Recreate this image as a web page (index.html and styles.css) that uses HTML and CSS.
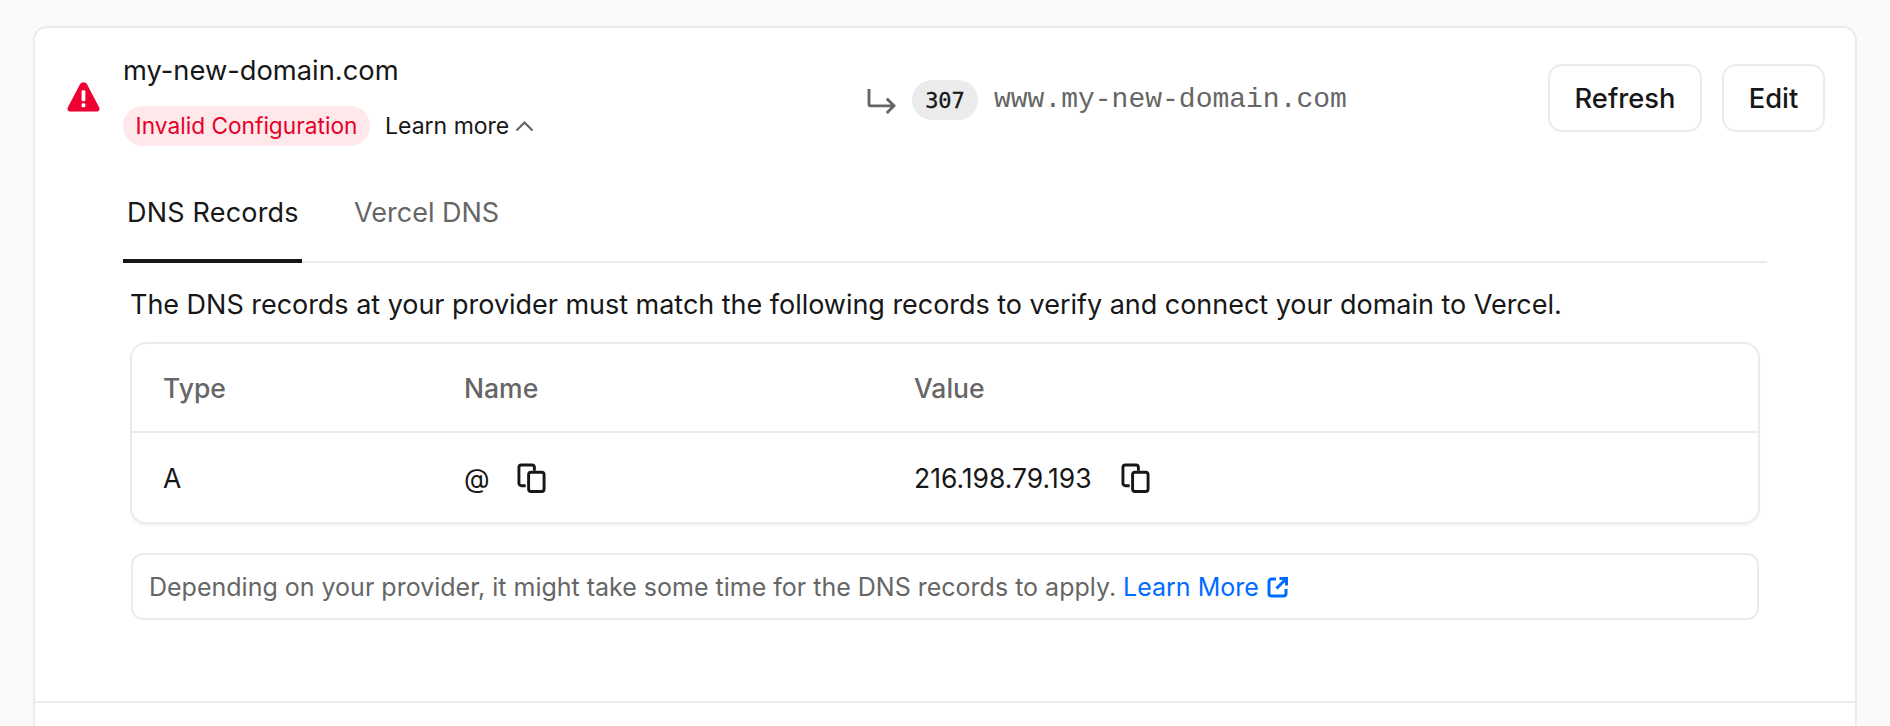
FILE: index.html
```html
<!DOCTYPE html>
<html lang="en">
<head>
<meta charset="utf-8">
<title>Domain</title>
<link rel="stylesheet" href="styles.css">
</head>
<body>
<main class="card">
  <header class="head">
    <svg class="warn" viewBox="0 0 32 29" aria-hidden="true"><path fill="#ee0030" d="M12.600 2.200c1.500-2.800 5.300-2.800 6.800 0l11.700 22.200c1 1.900.2 4.100-2 4.100H2.900c-2.200 0-3-2.200-2-4.100z"/><rect x="14.200" y="8" width="3.600" height="10.500" rx="1" fill="#fff"/><rect x="14.200" y="20.600" width="3.600" height="3.800" rx="1" fill="#fff"/></svg>
    <div class="title-block">
      <div class="domain">my-new-domain.com</div>
      <div class="status">
        <span class="badge">Invalid Configuration</span>
        <span class="learn">Learn more</span>
        <svg class="chev" viewBox="0 0 19 12" aria-hidden="true"><path d="M1.500 10.500 9.500 2.500l8 8" fill="none" stroke="#666" stroke-width="2.200"/></svg>
      </div>
    </div>
    <div class="redirect">
      <svg class="arrow" viewBox="0 0 30 26" aria-hidden="true"><path d="M2 0v15.500a2 2 0 0 0 2 2h24M20.500 10l7.500 7.500-7.500 7.500" fill="none" stroke="#666" stroke-width="3"/></svg>
      <span class="code">307</span>
      <span class="target">www.my-new-domain.com</span>
    </div>
    <div class="actions">
      <button class="btn btn-refresh">Refresh</button>
      <button class="btn btn-edit">Edit</button>
    </div>
  </header>

  <section class="body">
    <nav class="tabs">
      <span class="tab active">DNS Records</span>
      <span class="tab">Vercel DNS</span>
    </nav>
    <div class="inner">
      <p class="intro">The DNS records at your provider must match the following records to verify and connect your domain to Vercel.</p>
      <div class="table">
        <div class="row row-head">
          <span class="c1">Type</span><span class="c2">Name</span><span>Value</span>
        </div>
        <div class="row row-data">
          <span class="c1">A</span>
          <span class="c2 cell"><span class="at">@</span><svg class="copy" viewBox="0 0 30 31" aria-hidden="true"><path d="M9 23.500H4.500a2.500 2.500 0 0 1-2.500-2.500V4.500A2.500 2.500 0 0 1 4.500 2h11A2.500 2.500 0 0 1 18 4.500V8" fill="none" stroke="#171717" stroke-width="3"/><rect x="12" y="9.500" width="16" height="20" rx="2.500" fill="none" stroke="#171717" stroke-width="3"/></svg></span>
          <span class="cell"><span class="ip">216.198.79.193</span><svg class="copy" viewBox="0 0 30 31" aria-hidden="true"><path d="M9 23.500H4.500a2.500 2.500 0 0 1-2.500-2.500V4.500A2.500 2.500 0 0 1 4.500 2h11A2.500 2.500 0 0 1 18 4.500V8" fill="none" stroke="#171717" stroke-width="3"/><rect x="12" y="9.500" width="16" height="20" rx="2.500" fill="none" stroke="#171717" stroke-width="3"/></svg></span>
        </div>
      </div>
      <div class="note">
        <span>Depending on your provider, it might take some time for the DNS records to apply.</span>
        <a class="link" href="#">Learn More</a>
        <svg class="ext" viewBox="0 0 22 22" aria-hidden="true"><path d="M9 3H4.500A2.500 2.500 0 0 0 2 5.500v12A2.500 2.500 0 0 0 4.500 20h12a2.500 2.500 0 0 0 2.500-2.500V13M9.500 12.500 19 3M12.500 2.500H19.500V9.500" fill="none" stroke="#006bff" stroke-width="3"/></svg>
      </div>
    </div>
  </section>
  <div class="foot"></div>
</main>
</body>
</html>
```
FILE: styles.css
```css
* { box-sizing: border-box; }
html, body { margin: 0; height: 726px; overflow: hidden; }
body {
  background: #fafafa;
  padding: 26px 33px 0 33px;
  font-family: Inter, "Noto Sans", sans-serif;
  color: #171717;
}
.card {
  width: 1824px;
  height: 800px;
  background: #fff;
  border: 2px solid #ebebeb;
  border-radius: 14px;
}
.head {
  display: flex;
  align-items: flex-start;
  height: 133px;
  padding: 0 29px 0 32px;
}
.warn { width: 33px; height: 30px; margin: 54px 23px 0 0; flex: none; }
.title-block { width: 744px; flex: none; }
.domain {
  font-size: 27.300px;
  line-height: 36px;
  margin-top: 25px;
}
.status { display: flex; align-items: center; margin-top: 17px; }
.badge {
  height: 40px;
  width: 247px;
  border-radius: 20px;
  background: #ffe8e9;
  color: #e6002b;
  font-size: 22.700px;
  line-height: 40px;
  text-align: center;
  margin-right: 15px;
}
.learn { font-size: 23px; }
.chev { width: 19px; height: 12px; margin-left: 6px; }
.redirect { display: flex; align-items: center; margin-top: 50px; flex: none; }
.arrow { width: 29px; height: 25px; margin-right: 16px; margin-top: 3px; }
.code {
  width: 66px;
  height: 40px;
  border-radius: 20px;
  background: #ebebeb;
  font-family: "DejaVu Sans Mono", monospace;
  font-size: 22px;
  line-height: 41px;
  text-align: center;
  margin-right: 16px;
  -webkit-text-stroke: 0.3px #171717;
}
.target {
  font-family: "Liberation Mono", monospace;
  font-size: 28px;
  line-height: 44px;
  color: #666;
}
.actions { display: flex; gap: 20px; margin-left: auto; margin-top: 36px; margin-right: 1px; }
.btn {
  height: 68px;
  background: #fff;
  border: 2px solid #ebebeb;
  border-radius: 14px;
  font-family: inherit;
  font-size: 27.300px;
  font-weight: 500;
  color: #171717;
  padding: 0;
}
.btn-refresh { width: 154px; }
.btn-edit { width: 103px; }
.body { padding: 0 87px 0 88px; }
.tabs {
  display: flex;
  height: 102px;
  border-bottom: 2px solid #ebebeb;
  width: 1644px;
}
.tab {
  height: 102px;
  line-height: 104px;
  font-size: 27px;
  color: #666;
  padding: 0 4px;
  margin-right: 48px;
  white-space: nowrap;
}
.tab.active {
  color: #171717;
  border-bottom: 4px solid #171717;
  width: 179px;
  letter-spacing: 0.200px;
}
.inner { padding: 0 0 0 7px; width: 1637px; }
.intro {
  margin: 25px 0 0;
  font-size: 27px;
  line-height: 34px;
  letter-spacing: -0.030px;
}
.table {
  margin-top: 20px;
  width: 1630px;
  height: 182px;
  border: 2px solid #ebebeb;
  border-radius: 16px;
  box-shadow: 0 2px 2px rgba(0,0,0,.05);
}
.row { display: flex; align-items: center; padding-left: 31px; font-size: 26.500px; }
.row-head { height: 89px; color: #666; border-bottom: 2px solid #ebebeb; font-weight: 500; }
.row-data { height: 89px; }
.c1 { width: 301px; flex: none; }
.c2 { width: 450px; flex: none; }
.cell { display: flex; align-items: center; }
.at { width: 53px; }
.ip { width: 207px; }
.copy { width: 29px; height: 30px; }
.note {
  margin-top: 29px;
  width: 1628px;
  margin-left: 1px;
  height: 67px;
  border: 2px solid #ebebeb;
  border-radius: 12px;
  padding-left: 16px;
  display: flex;
  align-items: center;
  font-size: 25px;
  color: #666;
}
.link { color: #006bff; text-decoration: none; margin-left: 7px; }
.ext { width: 22px; height: 22px; margin-left: 8px; }
.foot { margin-top: 81px; border-top: 2px solid #ebebeb; }
```
